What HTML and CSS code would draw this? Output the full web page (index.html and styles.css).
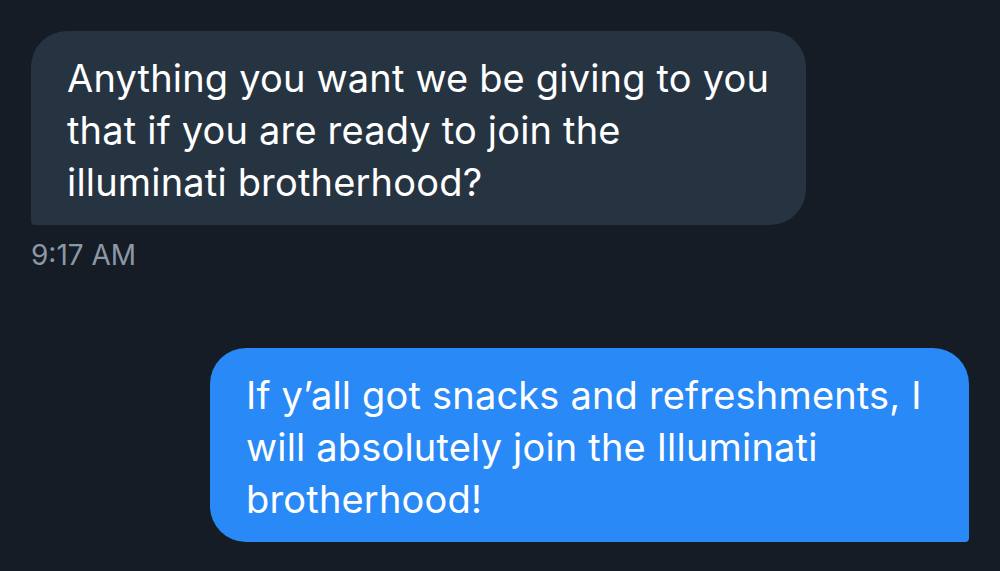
FILE: index.html
```html
<!DOCTYPE html>
<html lang="en">
<head>
    <meta charset="UTF-8">
    <meta name="viewport" content="width=device-width, initial-scale=1.0">
    <title>Messages</title>
    <link rel="stylesheet" href="styles.css">
</head>
<body>
    <div class="chat">
        <div class="msg received">
            <div class="bubble">Anything you want we be giving to you that if you are ready to join the illuminati brotherhood?</div>
            <div class="time">9:17 AM</div>
        </div>
        <div class="msg sent">
            <div class="bubble">If y’all got snacks and refreshments, I will absolutely join the Illuminati brotherhood!</div>
        </div>
    </div>
</body>
</html>
```

FILE: styles.css
```css
body {
    margin: 0;
    background-color: #161c25;
    font-family: Inter, "Noto Sans", sans-serif;
    color: #ffffff;
}
.chat {
    display: flex;
    flex-direction: column;
    padding: 31px 31px 0 31px;
}
.msg {
    display: flex;
    flex-direction: column;
}
.bubble {
    box-sizing: border-box;
    padding: 21px 36px 17px 36px;
    font-size: 38px;
    line-height: 52px;
    letter-spacing: 0.18px;
}
.received .bubble {
    width: 775px;
    background-color: #263341;
    border-radius: 36px 36px 36px 4px;
}
.sent {
    align-items: flex-end;
    margin-top: 76px;
}
.sent .bubble {
    width: 759px;
    background-color: #2989f6;
    border-radius: 36px 36px 4px 36px;
}
.time {
    margin-top: 13px;
    font-size: 28px;
    line-height: 34px;
    color: #8b98a5;
}
```
